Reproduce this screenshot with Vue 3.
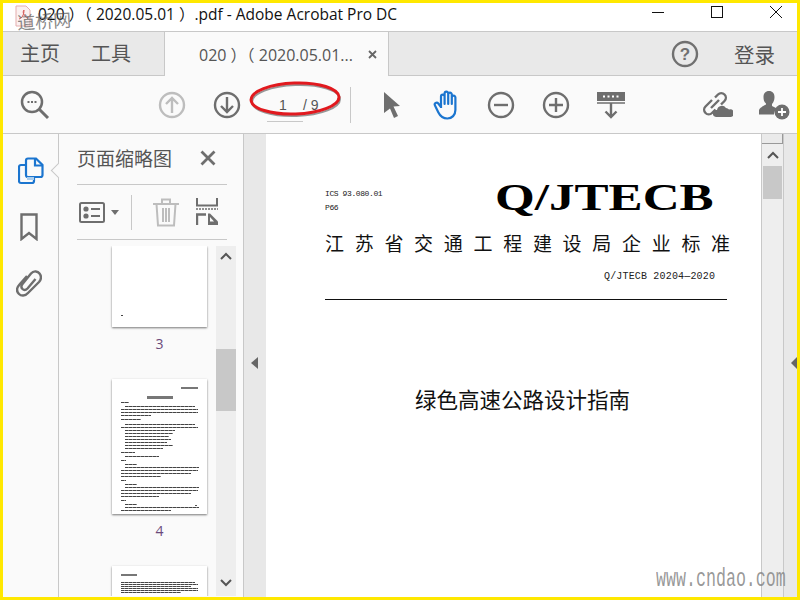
<script setup>
const spec = [
  [8,0,3],[70,4,2],[77,0,2],[77,0,2],[30,0,3],
  [20,0,4],[70,4,2],[77,0,2],[50,4,2],[48,4,2],[44,4,2],[46,4,2],[42,4,2],[48,4,2],[38,4,3],
  [14,0,3],[34,4,3],[5,0,3],[12,4,2],[74,4,2],[77,0,2],[70,0,2],[40,0,3],
  [5,0,3],[12,4,2],[74,4,2],[77,0,2],[70,0,2],[38,0,3],
  [5,0,3],[12,4,2],[74,4,2],[50,0,3],[5,0,3],[20,4,2],[74,4,2],[45,0,0]
]
const lines = spec.map(([w, indent, gap], i) => ({ id: i, width: w + 'px', marginLeft: indent + 'px', marginBottom: gap + 'px' }))
const nextLines = [74, 77, 70, 77, 77, 60].map((w, i) => ({ id: i, width: w + 'px' }))
</script>

<template>
  <div class="frame">
    <header class="titlebar">
      <span class="title">020 ）（ 2020.05.01 ）.pdf - Adobe Acrobat Pro DC</span>
      <div class="winctl">
        <svg width="12" height="12" viewBox="0 0 12 12"><path d="M0 6.500h12" stroke="#111" fill="none"/></svg>
        <svg width="12" height="12" viewBox="0 0 12 12"><rect x=".5" y=".5" width="11" height="11" stroke="#111" fill="none"/></svg>
        <svg width="12" height="12" viewBox="0 0 12 12"><path d="M0 0l12 12M12 0L0 12" stroke="#111" fill="none"/></svg>
      </div>
    </header>

    <nav class="tabbar">
      <div class="navlinks"><span>主页</span><span>工具</span></div>
      <div class="tab"><span>020 ）（ 2020.05.01...</span>
        <svg class="tabx" width="9" height="9" viewBox="0 0 9 9"><path d="M1 1l7 7M8 1L1 8" stroke="#666" stroke-width="1.800" fill="none"/></svg>
      </div>
      <div class="spacer"></div>
      <svg class="help" width="28" height="28" viewBox="0 0 28 28">
        <circle cx="14" cy="14" r="12" fill="none" stroke="#707070" stroke-width="2.400"/>
        <text x="14" y="20" text-anchor="middle" font-size="17" font-weight="700" fill="#707070" font-family="Liberation Sans">?</text>
      </svg>
      <span class="login">登录</span>
    </nav>

    <div class="toolbar">
      <svg class="ti search" width="30" height="30" viewBox="0 0 30 30">
        <circle cx="12" cy="12" r="10" fill="none" stroke="#6e6e6e" stroke-width="2.500"/>
        <path d="M19.500 19.500L28 28" stroke="#6e6e6e" stroke-width="3" fill="none"/>
        <path d="M7.500 12h2M11 12h2M14.500 12h2" stroke="#6e6e6e" stroke-width="1.800" fill="none"/>
      </svg>
      <svg class="ti up" width="28" height="28" viewBox="0 0 28 28">
        <circle cx="14" cy="14" r="12" fill="none" stroke="#bdbdbd" stroke-width="2.400"/>
        <path d="M14 22V7M8 13l6-6 6 6" fill="none" stroke="#bdbdbd" stroke-width="2.400"/>
      </svg>
      <svg class="ti down" width="28" height="28" viewBox="0 0 28 28">
        <circle cx="14" cy="14" r="12" fill="none" stroke="#6e6e6e" stroke-width="2.400"/>
        <path d="M14 6v15M8 15l6 6 6-6" fill="none" stroke="#6e6e6e" stroke-width="2.400"/>
      </svg>
      <div class="pager"><span class="current">1</span><span class="total">/ 9</span></div>
      <div class="sep"></div>
      <svg class="ti cursor" width="16" height="26" viewBox="0 0 16 26">
        <path d="M0 0l16 14-6.500 .5L14 24l-4 2-4-9.500L0 21z" fill="#6e6e6e"/>
      </svg>
      <svg class="ti hand" width="28" height="30" viewBox="0 0 28 30">
        <path d="M8 18V6.500a1.800 1.800 0 0 1 3.600 0V14V3.500a1.800 1.800 0 0 1 3.600 0V14V4.500a1.800 1.800 0 0 1 3.600 0V14V7.500a1.800 1.800 0 0 1 3.600 0V20c0 5-3.500 8.500-8 8.500s-7-2-9-6L2 15.500c-1.200-2.300 1.800-3.800 3.300-2L8 17" fill="none" stroke="#1b75cf" stroke-width="2.200" stroke-linejoin="round"/>
      </svg>
      <svg class="ti minus" width="28" height="28" viewBox="0 0 28 28">
        <circle cx="14" cy="14" r="12" fill="none" stroke="#6e6e6e" stroke-width="2.400"/>
        <path d="M7 14h14" stroke="#6e6e6e" stroke-width="2.400"/>
      </svg>
      <svg class="ti plus" width="28" height="28" viewBox="0 0 28 28">
        <circle cx="14" cy="14" r="12" fill="none" stroke="#6e6e6e" stroke-width="2.400"/>
        <path d="M7 14h14M14 7v14" stroke="#6e6e6e" stroke-width="2.400"/>
      </svg>
      <svg class="ti keypad" width="28" height="28" viewBox="0 0 28 28">
        <rect x="0" y="1" width="28" height="9" fill="#6e6e6e"/>
        <path d="M6 5.500h2M10.500 5.500h2M15 5.500h2M19.500 5.500h2" stroke="#fff" stroke-width="2"/>
        <path d="M0 12h28" stroke="#6e6e6e" stroke-width="1.500"/>
        <path d="M14 12v14M8.500 20.500L14 26l5.500-5.500" fill="none" stroke="#6e6e6e" stroke-width="2.400"/>
      </svg>
      <div class="spacer"></div>
      <svg class="ti link" width="32" height="28" viewBox="0 0 32 28">
        <path d="M11 9l-6.500 6.500a4.500 4.500 0 0 0 6.500 6.500l3.500-3.500M10 17l8-8M14 6.500l3-3a4.500 4.500 0 0 1 6.500 6.500l-3.500 3.500" fill="none" stroke="#6e6e6e" stroke-width="2.400"/>
        <path d="M15 26a3.500 3.500 0 0 1 1-7 5 5 0 0 1 9-2 4.500 4.500 0 0 1 3 1.500 3.800 3.800 0 0 1 2 7.500z" fill="#6e6e6e"/>
      </svg>
      <svg class="ti user" width="32" height="30" viewBox="0 0 32 30">
        <path d="M11 1c3.500 0 5.500 2.500 5.500 6 0 3-1 5.500-2.500 7v2l5 2.500c-2 1.500-3 3.500-3 6H1v-3.500c0-2 1-3 5-5.500l2-1v-1C6 12 5.500 10 5.500 7 5.500 3.500 7.500 1 11 1z" fill="#6e6e6e"/>
        <circle cx="24" cy="22" r="7.500" fill="#6e6e6e"/>
        <path d="M20 22h8M24 18v8" stroke="#fff" stroke-width="1.800"/>
      </svg>
    </div>

    <main class="workspace">
      <aside class="rail">
        <svg width="26" height="28" viewBox="0 0 26 28">
          <path d="M8 3.500a2 2 0 0 1 2-2h8l6.500 6.500v10a2 2 0 0 1-2 2H10a2 2 0 0 1-2-2z" fill="none" stroke="#1b75cf" stroke-width="2.200"/>
          <path d="M17 1.500v7h7.500" fill="none" stroke="#1b75cf" stroke-width="2.200"/>
          <path d="M8 8H3a2 2 0 0 0-2 2v14a2 2 0 0 0 2 2h11a2 2 0 0 0 2-2v-4" fill="none" stroke="#1b75cf" stroke-width="2.200"/>
          <rect x="9" y="20" width="7" height="3" fill="#a9cdee"/>
        </svg>
        <svg class="railicon" width="18" height="28" viewBox="0 0 18 28">
          <path d="M1.500 1.500h15v24.500L9 20l-7.500 6z" fill="none" stroke="#6e6e6e" stroke-width="2.400"/>
        </svg>
        <svg class="railicon" width="26" height="28" viewBox="0 0 26 28">
          <path d="M11 7L3.500 15.500c-3.500 4-2.500 7.500-.5 9.500s6 2.500 9-1L23 13c3-3.500 2-6.500 .5-8.500S18 1 15 4.500L6.500 15c-2 2.500-1 4 0 5s3 1.500 5-.5l8-9.500" fill="none" stroke="#6e6e6e" stroke-width="2.400"/>
        </svg>
        <span class="notch"></span>
      </aside>

      <section class="panel">
        <div class="panelhead">
          <span>页面缩略图</span>
          <svg width="16" height="16" viewBox="0 0 16 16"><path d="M1.500 1.500l13 13M14.500 1.500l-13 13" stroke="#6e6e6e" stroke-width="2.800" fill="none"/></svg>
        </div>
        <div class="paneltools">
          <svg width="26" height="21" viewBox="0 0 26 21">
            <rect x="1" y="1" width="24" height="19" rx="1.500" fill="none" stroke="#6e6e6e" stroke-width="2"/>
            <circle cx="7" cy="7" r="2.600" fill="#6e6e6e"/><circle cx="7" cy="14" r="2.600" fill="#6e6e6e"/>
            <path d="M12 7h9M12 14h9" stroke="#6e6e6e" stroke-width="2"/>
          </svg>
          <span class="caret"></span>
          <span class="vsep"></span>
          <svg class="trash" width="26" height="29" viewBox="0 0 26 29">
            <path d="M0 6h26M9 5V1.500h8V5M3.500 6l1.500 21.500h16L22.500 6M10 10v14M13 10v14M16 10v14" fill="none" stroke="#bdbdbd" stroke-width="2"/>
          </svg>
          <svg class="extract" width="22" height="27" viewBox="0 0 22 27">
            <path d="M1 0v7.500h20V0" fill="none" stroke="#6e6e6e" stroke-width="2"/>
            <path d="M0 11h22" stroke="#6e6e6e" stroke-width="1.500" stroke-dasharray="2 1"/>
            <path d="M1 27V16.500h9" fill="none" stroke="#6e6e6e" stroke-width="2.400"/>
            <path d="M12 15.500h2l8 8V27H12z" fill="#6e6e6e"/>
            <path d="M14 19l4 4.500h-4z" fill="#fafafa"/>
          </svg>
        </div>
        <div class="thumbs">
          <div class="thumblist">
            <div class="sheet blank"><i class="dot"></i></div>
            <div class="plabel">3</div>
            <div class="sheet full">
              <b class="corner"></b>
              <b class="head"></b>
              <i v-for="l in lines" :key="l.id" class="tline" :style="{ width: l.width, marginBottom: l.marginBottom, marginLeft: l.marginLeft }"></i>
              <b class="pno"></b>
            </div>
            <div class="plabel">4</div>
            <div class="sheet tail">
              <b class="tailhead"></b>
              <i v-for="l in nextLines" :key="l.id" class="tline" :style="{ width: l.width }"></i>
            </div>
          </div>
          <div class="tscroll">
            <svg width="12" height="8" viewBox="0 0 12 8"><path d="M1 7l5-5 5 5" fill="none" stroke="#555" stroke-width="2"/></svg>
            <span class="tthumb"></span>
            <svg width="12" height="8" viewBox="0 0 12 8"><path d="M1 1l5 5 5-5" fill="none" stroke="#555" stroke-width="2"/></svg>
          </div>
        </div>
      </section>

      <div class="gutter"><span class="larrow"></span></div>

      <article class="page">
        <div class="dochead">
          <div class="meta"><div>ICS 93.080.01</div><div>P66</div></div>
          <div class="brand">Q/JTECB</div>
        </div>
        <div class="org">江苏省交通工程建设局企业标准</div>
        <div class="code">Q/JTECB 20204—2020</div>
        <div class="rule"></div>
        <h1 class="doctitle">绿色高速公路设计指南</h1>
      </article>

      <div class="vscroll">
        <span class="cap"></span>
        <svg width="12" height="8" viewBox="0 0 12 8"><path d="M1 7l5-5 5 5" fill="none" stroke="#555" stroke-width="2"/></svg>
        <span class="vthumb"></span>
      </div>
      <div class="strip"><span class="larrow end"></span></div>
    </main>

    <svg class="ring" width="100" height="44" viewBox="0 0 100 44">
      <ellipse cx="49" cy="23.500" rx="44" ry="15.500" fill="none" stroke="#555" stroke-width="2" transform="rotate(-2 49 23)" opacity=".6"/>
      <ellipse cx="48" cy="21.500" rx="44" ry="15.500" fill="none" stroke="#e1191e" stroke-width="3" transform="rotate(-2 48 21)"/>
    </svg>
    <div class="mark-icon">
      <svg width="16" height="22" viewBox="0 0 16 22"><path d="M1 1h10l4 4v16H1z" fill="#fbeeee" stroke="#e0a0a0"/><path d="M4 14c3-1 5-4 5-9-2 2 0 7 4 8" fill="none" stroke="#d04040"/></svg>
    </div>
    <div class="mark-cn">道桥网</div>
    <div class="mark-url">www.cndao.com</div>
  </div>
</template>

<style>
html, body { margin: 0; padding: 0; background: #fff; }
</style>

<style scoped>
.frame {
  position: relative;
  width: 800px;
  height: 600px;
  box-sizing: border-box;
  border: 3px solid #ffe800;
  display: flex;
  flex-direction: column;
  overflow: hidden;
  background: #fff;
  font-family: "Open Sans", "Noto Sans CJK SC", sans-serif;
  color: #333;
}
.titlebar {
  height: 29px;
  box-sizing: border-box;
  border-bottom: 1px solid #c8c8c8;
  display: flex;
  align-items: center;
  padding-left: 35px;
  flex: none;
}
.title { font-size: 15.5px; color: #111; white-space: nowrap; margin-top: -8px; }
.winctl { margin-left: auto; display: flex; gap: 47px; padding-right: 15px; margin-top: -10px; }
.winctl svg { display: block; }
.tabbar {
  height: 44px;
  box-sizing: border-box;
  flex: none;
  background: #e9e9e9;
  border-bottom: 1px solid #c8c8c8;
  display: flex;
  align-items: stretch;
}
.navlinks { display: flex; gap: 31px; padding-left: 17px; width: 161px; box-sizing: border-box; align-items: center; font-size: 20px; color: #555; padding-bottom: 2px; }
.tab {
  width: 225px;
  box-sizing: border-box;
  background: #fafafa;
  border-left: 1px solid #c8c8c8;
  border-right: 1px solid #c8c8c8;
  margin-bottom: -1px;
  display: flex;
  align-items: center;
  padding-left: 34px;
  font-size: 16px;
  color: #555;
  white-space: nowrap;
}
.tabx { margin-left: 15px; display: block; flex: none; }
.spacer { flex: 1; }
.help { align-self: center; margin-right: 35px; }
.login { align-self: center; font-size: 20.500px; color: #555; margin-right: 22px; }
.toolbar {
  height: 58px;
  box-sizing: border-box;
  flex: none;
  background: #fafafa;
  border-bottom: 1px solid #c8c8c8;
  display: flex;
  align-items: center;
  padding-left: 17px;
}
.ti { flex: none; display: block; }
.search { margin-right: 108px; margin-top: 1px; }
.up { margin-right: 27px; }
.pager { width: 109px; display: flex; font-size: 14px; color: #555; padding-left: 26px; box-sizing: border-box; height: 36px; align-items: center; position: relative; font-family: "Liberation Sans", sans-serif; }
.pager::after { content: ""; position: absolute; left: 26px; bottom: 1px; width: 36px; height: 1px; background: #c8c8c8; }
.current { width: 40px; padding-left: 12px; box-sizing: border-box; }
.total { margin-left: -4px; }
.sep { width: 1px; height: 36px; background: #c8c8c8; margin-right: 33px; }
.cursor { margin-right: 33px; }
.hand { margin-right: 26px; }
.minus { margin-right: 27px; }
.plus { margin-right: 27px; }
.link { margin-right: 25px; }
.user { margin-right: 7px; }
.workspace { flex: 1; min-height: 0; display: flex; background: #fff; }
.rail {
  width: 56px;
  box-sizing: border-box;
  flex: none;
  background: #fafafa;
  border-right: 1px solid #c8c8c8;
  position: relative;
  display: flex;
  flex-direction: column;
  align-items: center;
  gap: 28px;
  padding-top: 23px;
}
.rail svg { display: block; }
.rail .railicon { margin-right: 3px; }
.notch {
  position: absolute;
  right: -6px;
  top: 31px;
  width: 10px;
  height: 10px;
  background: #fafafa;
  border-left: 1px solid #c8c8c8;
  border-bottom: 1px solid #c8c8c8;
  transform: rotate(45deg);
}
.panel {
  width: 185px;
  flex: none;
  box-sizing: border-box;
  background: #fafafa;
  border-right: 1px solid #c8c8c8;
  display: flex;
  flex-direction: column;
}
.panelhead, .paneltools {
  margin: 0 16px 0 18px;
  border-bottom: 1px solid #c8c8c8;
  display: flex;
  align-items: center;
  box-sizing: border-box;
}
.panelhead { height: 51px; justify-content: space-between; font-size: 19px; color: #555; padding-right: 11px; padding-bottom: 3px; }
.paneltools { height: 55px; padding-left: 2px; }
.paneltools svg { display: block; flex: none; }
.caret { width: 0; height: 0; border: 4px solid transparent; border-top: 5px solid #6e6e6e; border-bottom: 0; margin-left: 6px; }
.vsep { width: 1px; height: 35px; background: #c8c8c8; margin-left: 12px; }
.trash { margin-left: 21px; }
.extract { margin-left: 17px; margin-bottom: 2px; }
.thumbs { flex: 1; min-height: 0; display: flex; margin-top: 6px; margin-bottom: 1px; }
.thumblist { width: 157px; flex: none; overflow: hidden; display: flex; flex-direction: column; align-items: flex-start; padding-left: 53px; box-sizing: border-box; }
.sheet { width: 95px; flex: none; background: #fff; box-shadow: 0 1px 2px #777; box-sizing: border-box; position: relative; display: flex; flex-direction: column; }
.blank { height: 81px; }
.dot { position: absolute; left: 9px; top: 69px; width: 2px; height: 1px; background: #444; }
.plabel { width: 95px; height: 52px; line-height: 34px; text-align: center; font-size: 14px; color: #6b4a7a; flex: none; }
.full { height: 135px; padding: 8px 9px 0 9px; overflow: hidden; }
.corner { height: 2px; width: 17px; background: #777; align-self: flex-end; margin-bottom: 7px; flex: none; }
.head { height: 3px; width: 26px; background: #777; align-self: center; margin-bottom: 3px; flex: none; }
.tline { display: block; height: 1px; flex: none; max-width: 77px; background: repeating-linear-gradient(90deg, #444 0 3px, #888 3px 4px); }
.pno { position: absolute; right: 10px; bottom: 8px; width: 2px; height: 1px; background: #555; }
.tail { height: 40px; padding: 8px 9px 0; overflow: hidden; }
.tailhead { width: 16px; height: 2px; background: #777; margin-bottom: 6px; flex: none; }
.tail .tline { margin-bottom: 1px; }
.tscroll { width: 20px; flex: none; background: #eeeeee; display: flex; flex-direction: column; align-items: center; position: relative; }
.tscroll svg { display: block; flex: none; }
.tscroll svg:first-child { margin-top: 6px; }
.tscroll svg:last-child { margin-top: auto; margin-bottom: 9px; }
.tthumb { position: absolute; left: 0; top: 103px; width: 20px; height: 62px; background: #c8c8c8; }
.gutter { width: 22px; flex: none; background: #e8e8e8; display: flex; align-items: center; padding-left: 7px; box-sizing: border-box; padding-bottom: 5px; }
.larrow { width: 0; height: 0; border: 6px solid transparent; border-right: 7px solid #666; border-left: 0; display: block; }
.page {
  width: 496px;
  flex: none;
  box-sizing: border-box;
  background: #fff;
  border-right: 1px solid #c8c8c8;
  padding: 41px 34px 0 59px;
  color: #000;
}
.dochead { display: flex; height: 42px; }
.meta { font-family: "Liberation Mono", monospace; font-size: 8px; line-height: 14px; padding-top: 12px; width: 170px; letter-spacing: -.4px; color: #222; }
.brand { font-family: "Liberation Serif", serif; font-weight: 700; font-size: 38px; line-height: 50px; white-space: nowrap; color: #000; transform: scaleX(1.345); transform-origin: left center; margin-top: -3px; }
.org { font-family: "Noto Sans CJK SC", sans-serif; font-size: 19px; letter-spacing: 10.700px; line-height: 24px; margin-top: 14px; white-space: nowrap; color: #111; }
.code { font-family: "Liberation Mono", monospace; font-size: 10px; letter-spacing: .17px; line-height: 14px; margin: 15px 0 0 279px; white-space: nowrap; color: #222; }
.rule { height: 1px; background: #111; margin-top: 15px; }
.doctitle { margin: 84px 0 0 90px; font-family: "Noto Sans CJK SC", sans-serif; font-weight: 400; font-size: 21.500px; line-height: 30px; color: #111; white-space: nowrap; }
.vscroll { width: 22px; flex: none; box-sizing: border-box; background: #eeeeee; border-right: 1px solid #c8c8c8; display: flex; flex-direction: column; align-items: center; }
.vscroll svg { display: block; flex: none; margin-top: 7px; }
.cap { width: 21px; height: 10px; flex: none; background: #eaeaea; border-right: 1px solid #999; border-bottom: 1px solid #999; box-sizing: border-box; }
.vthumb { width: 19px; height: 33px; background: #c8c8c8; margin-top: 7px; flex: none; }
.strip { flex: 1; background: #e8e8e8; display: flex; align-items: center; justify-content: flex-end; padding-bottom: 5px; }
.end { border-width: 6px 6px 6px 0; }
.ring { position: absolute; left: 244px; top: 74px; pointer-events: none; }
.mark-icon { position: absolute; left: 12px; top: 2px; opacity: .85; }
.mark-cn { position: absolute; left: 14px; top: 5px; font-family: "Noto Sans CJK SC", sans-serif; font-size: 18px; color: rgba(90,90,90,.72); line-height: 24px; transform: rotate(-3deg); }
.mark-url { position: absolute; left: 653px; top: 562px; font-family: "Liberation Mono", monospace; font-size: 26px; line-height: 28px; color: rgba(135,135,135,.85); transform: scaleX(.64); transform-origin: left center; white-space: nowrap; }
</style>
